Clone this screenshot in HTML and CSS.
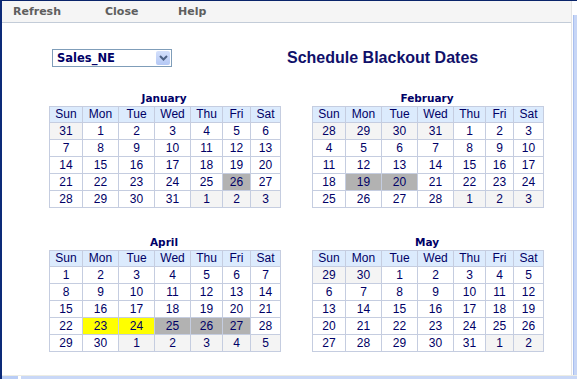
FILE: index.html
```html
<!DOCTYPE html>
<html lang="en">

<head>
    <meta charset="UTF-8">
    <title>Schedule Blackout Dates</title>
    <link rel="stylesheet" href="styles.css">
</head>

<body>
    <div class="window">
        <div class="frame">
            <div class="page">
                <div class="toolbar">
                    <span class="tool tool-refresh">Refresh</span>
                    <span class="tool tool-close">Close</span>
                    <span class="tool">Help</span>
                </div>

                <div class="content">
                    <div class="top-row">
                        <div class="select">
                            <span class="select-value">Sales_NE</span>
                            <span class="select-button">
                                <svg width="9" height="6" viewBox="0 0 9 6">
                                    <path d="M1 1 L4.5 4.5 L8 1" fill="none" stroke="#4d6185" stroke-width="2" />
                                </svg>
                            </span>
                        </div>
                        <h1 class="page-title">Schedule Blackout Dates</h1>
                    </div>

                    <div class="calendars">
                        <!-- January -->
                        <div class="month">
                            <div class="month-title">January</div>
                            <table class="cal">
                                <colgroup>
                                    <col class="c-sun"><col class="c-mon"><col class="c-tue"><col class="c-wed"><col class="c-thu"><col class="c-fri"><col class="c-sat">
                                </colgroup>
                                <tr class="head"><th>Sun</th><th>Mon</th><th>Tue</th><th>Wed</th><th>Thu</th><th>Fri</th><th>Sat</th></tr>
                                <tr><td class="other">31</td><td>1</td><td>2</td><td>3</td><td>4</td><td>5</td><td>6</td></tr>
                                <tr><td>7</td><td>8</td><td>9</td><td>10</td><td>11</td><td>12</td><td>13</td></tr>
                                <tr><td>14</td><td>15</td><td>16</td><td>17</td><td>18</td><td>19</td><td>20</td></tr>
                                <tr><td>21</td><td>22</td><td>23</td><td>24</td><td>25</td><td class="blackout">26</td><td>27</td></tr>
                                <tr><td>28</td><td>29</td><td>30</td><td>31</td><td class="other">1</td><td class="other">2</td><td class="other">3</td></tr>
                            </table>
                        </div>

                        <!-- February -->
                        <div class="month">
                            <div class="month-title">February</div>
                            <table class="cal">
                                <colgroup>
                                    <col class="c-sun"><col class="c-mon"><col class="c-tue"><col class="c-wed"><col class="c-thu"><col class="c-fri"><col class="c-sat">
                                </colgroup>
                                <tr class="head"><th>Sun</th><th>Mon</th><th>Tue</th><th>Wed</th><th>Thu</th><th>Fri</th><th>Sat</th></tr>
                                <tr><td class="other">28</td><td class="other">29</td><td class="other">30</td><td class="other">31</td><td>1</td><td>2</td><td>3</td></tr>
                                <tr><td>4</td><td>5</td><td>6</td><td>7</td><td>8</td><td>9</td><td>10</td></tr>
                                <tr><td>11</td><td>12</td><td>13</td><td>14</td><td>15</td><td>16</td><td>17</td></tr>
                                <tr><td>18</td><td class="blackout">19</td><td class="blackout">20</td><td>21</td><td>22</td><td>23</td><td>24</td></tr>
                                <tr><td>25</td><td>26</td><td>27</td><td>28</td><td class="other">1</td><td class="other">2</td><td class="other">3</td></tr>
                            </table>
                        </div>

                        <!-- April -->
                        <div class="month">
                            <div class="month-title">April</div>
                            <table class="cal">
                                <colgroup>
                                    <col class="c-sun"><col class="c-mon"><col class="c-tue"><col class="c-wed"><col class="c-thu"><col class="c-fri"><col class="c-sat">
                                </colgroup>
                                <tr class="head"><th>Sun</th><th>Mon</th><th>Tue</th><th>Wed</th><th>Thu</th><th>Fri</th><th>Sat</th></tr>
                                <tr><td>1</td><td>2</td><td>3</td><td>4</td><td>5</td><td>6</td><td>7</td></tr>
                                <tr><td>8</td><td>9</td><td>10</td><td>11</td><td>12</td><td>13</td><td>14</td></tr>
                                <tr><td>15</td><td>16</td><td>17</td><td>18</td><td>19</td><td>20</td><td>21</td></tr>
                                <tr><td>22</td><td class="selected">23</td><td class="selected">24</td><td class="blackout">25</td><td class="blackout">26</td><td class="blackout">27</td><td>28</td></tr>
                                <tr><td>29</td><td>30</td><td class="other">1</td><td class="other">2</td><td class="other">3</td><td class="other">4</td><td class="other">5</td></tr>
                            </table>
                        </div>

                        <!-- May -->
                        <div class="month">
                            <div class="month-title">May</div>
                            <table class="cal">
                                <colgroup>
                                    <col class="c-sun"><col class="c-mon"><col class="c-tue"><col class="c-wed"><col class="c-thu"><col class="c-fri"><col class="c-sat">
                                </colgroup>
                                <tr class="head"><th>Sun</th><th>Mon</th><th>Tue</th><th>Wed</th><th>Thu</th><th>Fri</th><th>Sat</th></tr>
                                <tr><td class="other">29</td><td class="other">30</td><td>1</td><td>2</td><td>3</td><td>4</td><td>5</td></tr>
                                <tr><td>6</td><td>7</td><td>8</td><td>9</td><td>10</td><td>11</td><td>12</td></tr>
                                <tr><td>13</td><td>14</td><td>15</td><td>16</td><td>17</td><td>18</td><td>19</td></tr>
                                <tr><td>20</td><td>21</td><td>22</td><td>23</td><td>24</td><td>25</td><td>26</td></tr>
                                <tr><td>27</td><td>28</td><td>29</td><td>30</td><td>31</td><td class="other">1</td><td class="other">2</td></tr>
                            </table>
                        </div>
                    </div>
                </div>
            </div>
            <div class="vscroll"></div>
        </div>
        <div class="hscroll">
            <div class="hscroll-btn"></div>
            <div class="hscroll-track"></div>
        </div>
    </div>
</body>

</html>
```

FILE: styles.css
```css
html,
body {
    margin: 0;
    padding: 0;
    background-color: #fff;
}

.window {
    width: 577px;
    height: 379px;
    display: flex;
    flex-direction: column;
    border-top: 1px solid #0a246a;
    border-left: 2px solid #0c2a78;
    box-sizing: border-box;
    overflow: hidden;
}

.frame {
    flex: 1;
    display: flex;
    min-height: 0;
}

.page {
    flex: 1;
    border-right: 1px solid #e4e4e4;
    display: flex;
    flex-direction: column;
}

.vscroll {
    width: 3px;
    margin-top: 14px;
    margin-left: 1px;
    background-color: #c7d6f6;
    border-left: 1px solid #a9bfef;
}

.hscroll {
    height: 3px;
    display: flex;
    gap: 3px;
    border-top: 1px solid #ecece4;
}

.hscroll-btn {
    width: 16px;
    background-color: #b9cdf6;
}

.hscroll-track {
    flex: 1;
    background-color: #c9d8f7;
}

/* Toolbar */
.toolbar {
    height: 21px;
    display: flex;
    align-items: center;
    padding-left: 11px;
    background-color: #f5f5f5;
    border-bottom: 1px solid #c3ccd8;
}

.tool {
    font-family: "DejaVu Sans", Verdana, sans-serif;
    font-size: 11px;
    font-weight: bold;
    color: #5e5e5e;
}

.tool-refresh {
    width: 92px;
}

.tool-close {
    width: 73px;
}

/* Content */
.content {
    padding-left: 47px;
}

.top-row {
    display: flex;
    align-items: center;
    margin-top: 26px;
    padding-left: 3px;
}

.select {
    width: 120px;
    height: 18px;
    box-sizing: border-box;
    border: 1px solid #7f9db9;
    display: flex;
    align-items: center;
    justify-content: space-between;
    padding: 0 1px 0 4px;
}

.select-value {
    font-family: "DejaVu Sans", Verdana, sans-serif;
    font-size: 11.5px;
    font-weight: bold;
    color: #000066;
}

.select-button {
    width: 14px;
    height: 14px;
    display: flex;
    align-items: center;
    justify-content: center;
    background: linear-gradient(#d4e0fb, #b4c8f5);
    border-radius: 2px;
}

.page-title {
    margin: 0 0 0 115px;
    font-family: "Liberation Sans", Arial, sans-serif;
    font-size: 16px;
    font-weight: bold;
    color: #10106a;
}

.calendars {
    display: grid;
    grid-template-columns: 230px 230px;
    column-gap: 33px;
    row-gap: 26px;
    margin-top: 23px;
}

.month-title {
    height: 16px;
    line-height: 16px;
    text-align: center;
    font-family: "DejaVu Sans", Verdana, sans-serif;
    font-size: 10.5px;
    font-weight: bold;
    color: #000066;
}

.cal {
    width: 231px;
    border-collapse: collapse;
    table-layout: fixed;
    font-family: "Liberation Sans", Arial, sans-serif;
    font-size: 12px;
    color: #000066;
}

.c-sun { width: 33px; }
.c-mon { width: 36px; }
.c-tue { width: 36px; }
.c-wed { width: 36px; }
.c-thu { width: 32px; }
.c-fri { width: 28px; }
.c-sat { width: 30px; }

.cal th,
.cal td {
    border: 1px solid #c5cde0;
    padding: 0;
    text-align: center;
    height: 16px;
    line-height: 15px;
}

.cal th {
    font-weight: normal;
    background-color: #dcebfd;
    height: 15px;
}

.cal td.other {
    background-color: #f4f4f4;
}

.cal td.blackout {
    background-color: #b2b2b2;
}

.cal td.selected {
    background-color: #ffff00;
}
```
